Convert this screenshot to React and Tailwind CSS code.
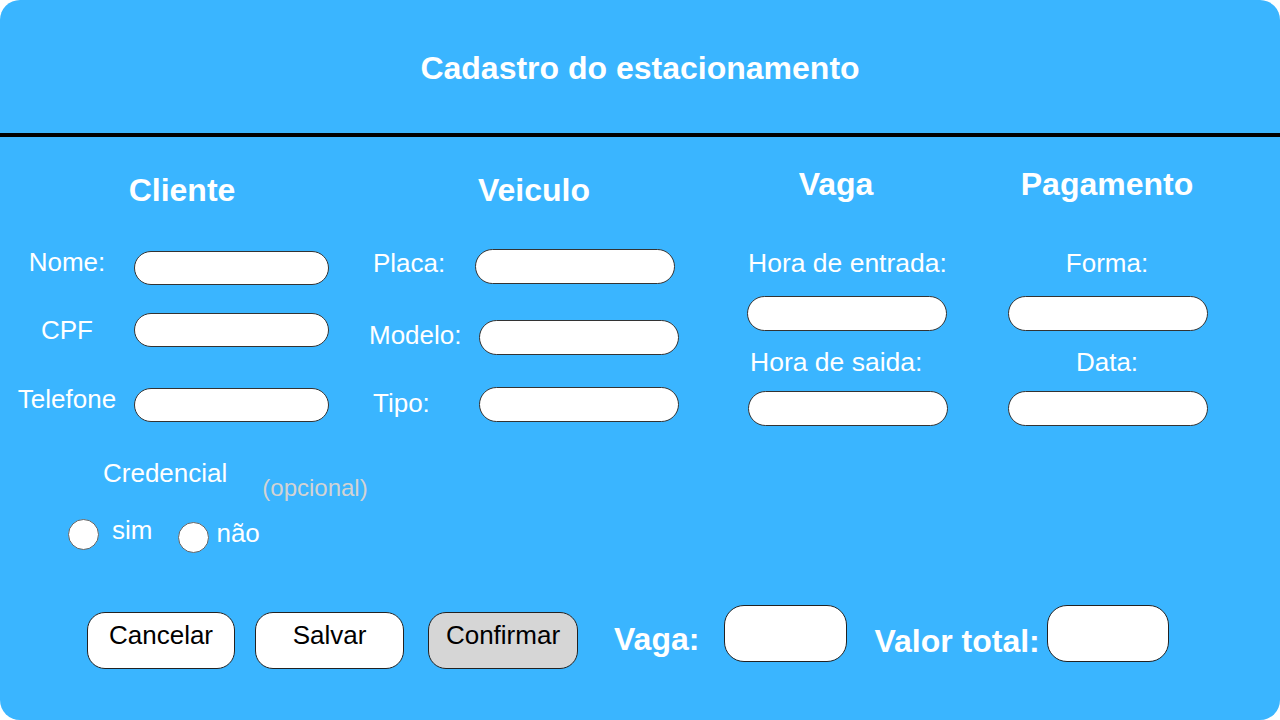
const font = { fontFamily: '"Liberation Sans", Arial, sans-serif' }

function Field({ className = '' }) {
  return <div className={`h-[35px] w-[200px] rounded-full border border-[#333] bg-white ${className}`} />
}

function Radio({ className = '' }) {
  return <div className={`h-[31px] w-[31px] rounded-full border border-[#444] bg-white ${className}`} />
}

function Btn({ children, className = '' }) {
  return (
    <button className={`mt-[7px] h-[57px] rounded-[18px] border border-[#222] pb-[11px] text-[26px] leading-[30px] text-black ${className}`}>
      {children}
    </button>
  )
}

export default function App() {
  return (
    <div className="h-[720px] w-[1280px] bg-white" style={font}>
      <div className="flex h-[720px] w-[1280px] flex-col overflow-hidden rounded-[20px] bg-[#3ab5ff] text-white">
        <header className="flex h-[137px] shrink-0 items-center justify-center border-b-4 border-black pt-[2px]">
          <h1 className="text-[32px] font-bold leading-[36px]">Cadastro do estacionamento</h1>
        </header>

        <div className="flex">
          {/* Cliente */}
          <section className="w-[364px] shrink-0">
            <h2 className="mt-[35px] text-center text-[32px] font-bold leading-[36px]">Cliente</h2>
            <div className="mt-[43px] flex items-start">
              <span className="-mt-[4px] w-[134px] text-center text-[26px] leading-[30px]">Nome:</span>
              <div className="h-[34px] w-[195px] rounded-full border border-[#333] bg-white" />
            </div>
            <div className="mt-[28px] flex items-start">
              <span className="mt-[2px] w-[134px] text-center text-[26px] leading-[30px]">CPF</span>
              <div className="h-[34px] w-[195px] rounded-full border border-[#333] bg-white" />
            </div>
            <div className="mt-[41px] flex items-start">
              <span className="-mt-[4px] w-[134px] text-center text-[26px] leading-[30px]">Telefone</span>
              <div className="h-[34px] w-[195px] rounded-full border border-[#333] bg-white" />
            </div>
            <div className="mt-[36px] flex items-start">
              <span className="ml-[103px] text-[26px] leading-[30px]">Credencial</span>
              <span className="ml-[35px] mt-[15px] text-[24px] leading-[30px] text-[#d3d3d3]">(opcional)</span>
            </div>
            <div className="mt-[16px] flex items-start">
              <Radio className="ml-[68px] border-[#666]" />
              <span className="ml-[13px] -mt-[4px] text-[26px] leading-[30px]">sim</span>
              <Radio className="ml-[26px] mt-[3px] h-[30px] w-[30px] border-[#666]" />
              <span className="ml-[7px] -mt-[1px] text-[26px] leading-[30px]">não</span>
            </div>
          </section>

          {/* Veiculo */}
          <section className="w-[340px] shrink-0">
            <h2 className="mt-[35px] text-center text-[32px] font-bold leading-[36px]">Veiculo</h2>
            <div className="mt-[41px] flex items-center pl-[9px]">
              <span className="-mt-[7px] w-[102px] text-[26px] leading-[30px]">Placa:</span>
              <Field />
            </div>
            <div className="mt-[36px] flex items-center pl-[5px]">
              <span className="-mt-[6px] w-[110px] text-[26px] leading-[30px]">Modelo:</span>
              <Field />
            </div>
            <div className="mt-[32px] flex items-center pl-[9px]">
              <span className="-mt-[3px] w-[106px] text-[26px] leading-[30px]">Tipo:</span>
              <Field />
            </div>
          </section>

          {/* Vaga */}
          <section className="w-[264px] shrink-0">
            <h2 className="mt-[29px] text-center text-[32px] font-bold leading-[36px]">Vaga</h2>
            <div className="ml-[44px] mt-[46px] text-[26.5px] leading-[30px]">Hora de entrada:</div>
            <Field className="ml-[43px] mt-[18px]" />
            <div className="ml-[46px] mt-[16px] text-[26.5px] leading-[30px]">Hora de saida:</div>
            <Field className="ml-[44px] mt-[14px]" />
          </section>

          {/* Pagamento */}
          <section className="w-[278px] shrink-0">
            <h2 className="mt-[29px] text-center text-[32px] font-bold leading-[36px]">Pagamento</h2>
            <div className="mt-[46px] text-center text-[26px] leading-[30px]">Forma:</div>
            <Field className="ml-[40px] mt-[18px]" />
            <div className="mt-[16px] text-center text-[26px] leading-[30px]">Data:</div>
            <Field className="ml-[40px] mt-[14px]" />
          </section>
        </div>

        <div className="mt-[52px] flex items-start">
          <Btn className="ml-[87px] w-[148px] bg-white">Cancelar</Btn>
          <Btn className="ml-[20px] w-[149px] bg-white">Salvar</Btn>
          <Btn className="ml-[24px] w-[150px] bg-[#d6d6d6]">Confirmar</Btn>
          <span className="ml-[36px] mt-[16px] text-[32px] font-bold leading-[36px]">Vaga:</span>
          <div className="ml-[25px] h-[57px] w-[123px] rounded-[20px] border border-[#222] bg-white" />
          <span className="ml-[27px] mt-[18px] text-[32px] font-bold leading-[36px]">Valor total:</span>
          <div className="ml-[7px] h-[57px] w-[122px] rounded-[20px] border border-[#222] bg-white" />
        </div>
      </div>
    </div>
  )
}
